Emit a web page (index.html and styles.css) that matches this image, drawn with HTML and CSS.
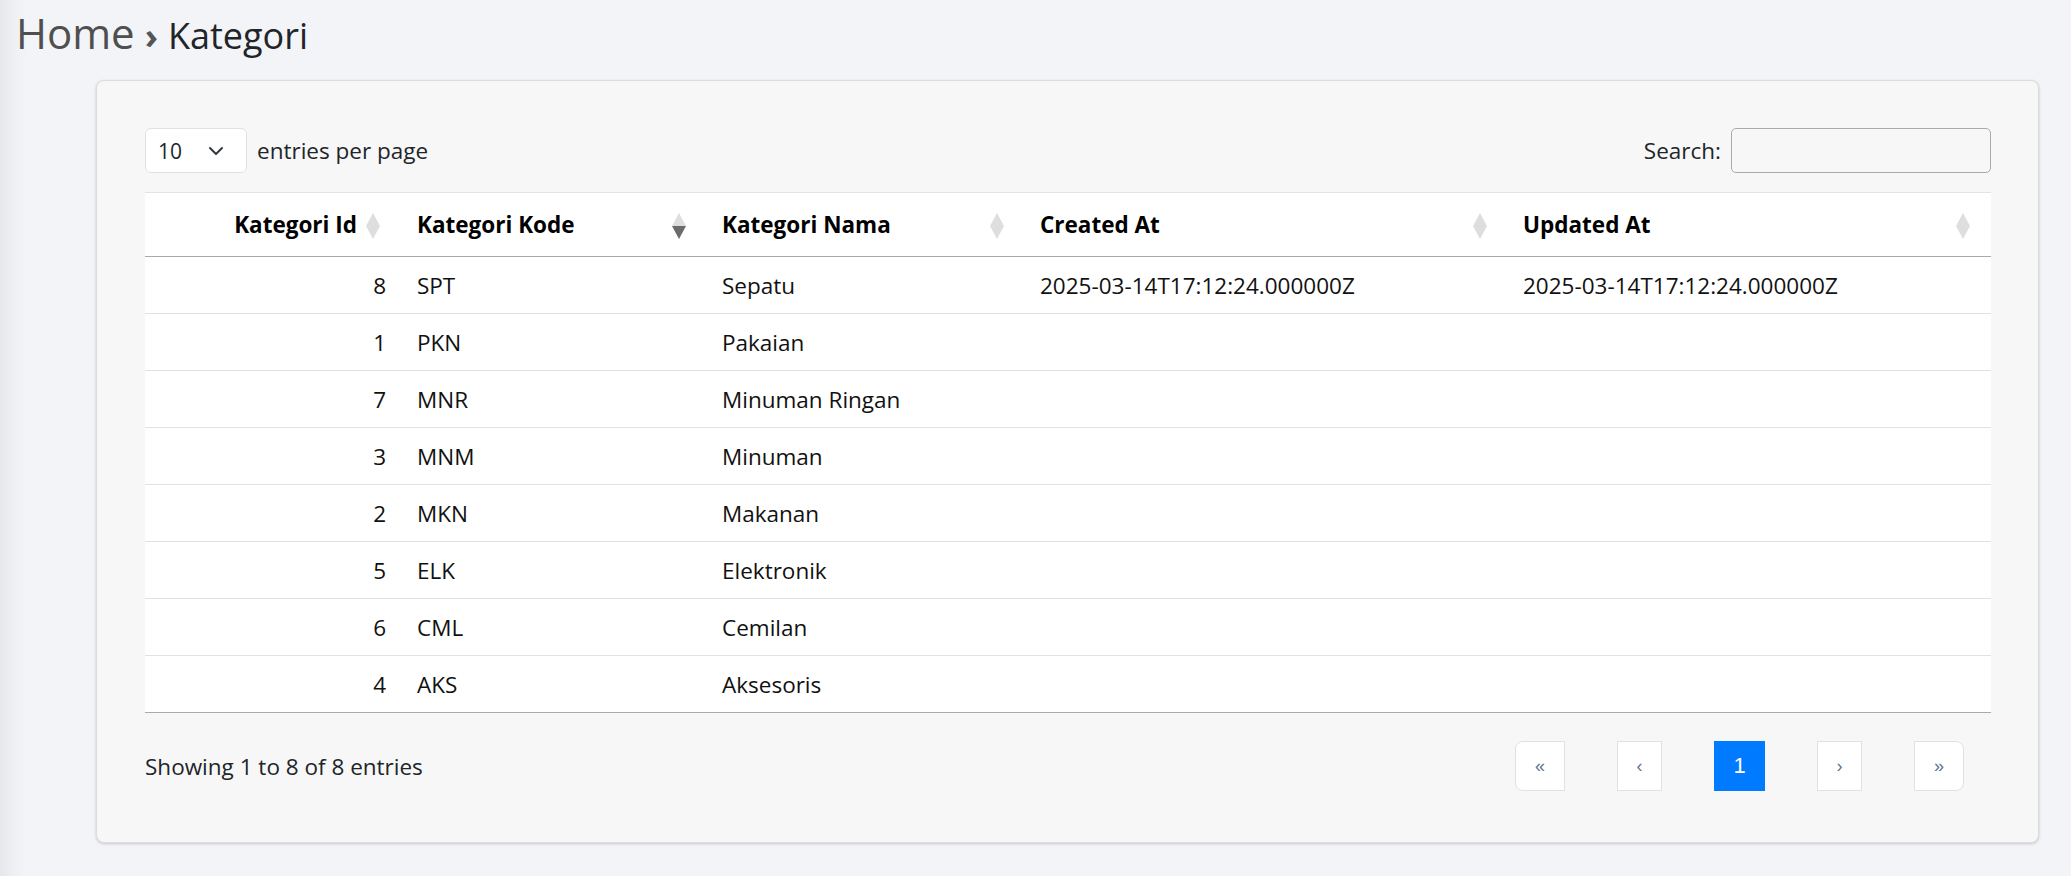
FILE: index.html
```html
<!DOCTYPE html>
<html lang="id">
<head>
<meta charset="utf-8">
<title>Kategori</title>
<link rel="stylesheet" href="styles.css">
</head>
<body>
<div class="page">
  <h1 class="crumbs"><span class="home">Home</span><span class="sep">›</span><span class="cur">Kategori</span></h1>
  <div class="card">
    <div class="top">
      <div class="perpage">
        <div class="select"><span>10</span><svg class="chev" width="16" height="10" viewBox="0 0 16 10"><path d="M2 2 L8 8 L14 2" fill="none" stroke="#343a40" stroke-width="2" stroke-linecap="round" stroke-linejoin="round"/></svg></div>
        <span class="label">entries per page</span>
      </div>
      <div class="search">
        <span class="label">Search:</span>
        <div class="input"></div>
      </div>
    </div>
    <table class="dt">
      <colgroup>
        <col class="c1"><col class="c2"><col class="c3"><col class="c4"><col class="c5">
      </colgroup>
      <thead>
        <tr>
          <th class="num">Kategori Id<span class="sorter"></span></th>
          <th>Kategori Kode<span class="sorter desc"></span></th>
          <th>Kategori Nama<span class="sorter"></span></th>
          <th>Created At<span class="sorter"></span></th>
          <th class="last">Updated At<span class="sorter"></span></th>
        </tr>
      </thead>
      <tbody>
        <tr><td class="num">8</td><td>SPT</td><td>Sepatu</td><td>2025-03-14T17:12:24.000000Z</td><td>2025-03-14T17:12:24.000000Z</td></tr>
        <tr><td class="num">1</td><td>PKN</td><td>Pakaian</td><td></td><td></td></tr>
        <tr><td class="num">7</td><td>MNR</td><td>Minuman Ringan</td><td></td><td></td></tr>
        <tr><td class="num">3</td><td>MNM</td><td>Minuman</td><td></td><td></td></tr>
        <tr><td class="num">2</td><td>MKN</td><td>Makanan</td><td></td><td></td></tr>
        <tr><td class="num">5</td><td>ELK</td><td>Elektronik</td><td></td><td></td></tr>
        <tr><td class="num">6</td><td>CML</td><td>Cemilan</td><td></td><td></td></tr>
        <tr><td class="num">4</td><td>AKS</td><td>Aksesoris</td><td></td><td></td></tr>
      </tbody>
    </table>
    <div class="bottom">
      <div class="info">Showing 1 to 8 of 8 entries</div>
      <nav class="pager">
        <span class="pg first">«</span>
        <span class="pg nav">‹</span>
        <span class="pg active">1</span>
        <span class="pg nav">›</span>
        <span class="pg last">»</span>
      </nav>
    </div>
  </div>
</div>
</body>
</html>
```
FILE: styles.css
```css
html, body {
  margin: 0;
  padding: 0;
}
body {
  background: linear-gradient(to right, #e6e7eb 0, #eff0f4 14px, #f3f4f8 28px, #f3f4f8 100%);
  font-family: "Open Sans", "Noto Sans", "Liberation Sans", sans-serif;
  color: #212529;
  font-size: 22.5px;
  min-height: 876px;
}
.page {
  padding: 0 32px 0 0;
}
.crumbs {
  margin: 0;
  padding: 8px 0 0 16px;
  height: 80px;
  box-sizing: border-box;
  font-weight: 400;
  line-height: 1.2;
  display: flex;
  align-items: baseline;
}
.home {
  font-size: 42px;
  color: #4f4f4f;
  font-weight: 500;
}
.sep {
  font-size: 36px;
  color: #555;
  font-weight: 700;
  margin: 0 10px 0 10px;
}
.cur {
  font-size: 36px;
  color: #212529;
}
.card {
  margin-left: 96px;
  background: #f7f7f7;
  border: 1px solid #dcdcdc;
  border-radius: 8px;
  box-shadow: 0 1px 3px rgba(0,0,0,0.18);
  padding: 47px 47px 51px 48px;
}
.top {
  display: flex;
  justify-content: space-between;
  align-items: center;
  height: 45px;
  margin-bottom: 19px;
}
.perpage, .search {
  display: flex;
  align-items: center;
}
.select {
  box-sizing: border-box;
  width: 102px;
  height: 45px;
  background: #fff;
  border: 1px solid #dee2e6;
  border-radius: 6px;
  display: flex;
  align-items: center;
  justify-content: space-between;
  padding: 0 22px 0 12px;
  font-size: 21px;
}
.perpage .label {
  margin-left: 10px;
}
.search .label {
  margin-right: 10px;
}
.input {
  box-sizing: border-box;
  width: 260px;
  height: 45px;
  border: 1px solid #aaa;
  border-radius: 5px;
}
.dt {
  width: 100%;
  border-collapse: collapse;
  table-layout: fixed;
  background: #fff;
}
.c1 { width: 261px; }
.c2 { width: 305px; }
.c3 { width: 318px; }
.c4 { width: 483px; }
.c5 { width: 479px; }
.dt thead tr {
  border-top: 1px solid #e3e3e3;
  border-bottom: 1px solid #aaa;
}
.dt th {
  height: 63px;
  padding: 0 11px;
  text-align: left;
  font-weight: 700;
  color: #000;
  position: relative;
  white-space: nowrap;
}
.dt th.num {
  text-align: right;
  padding-right: 49px;
}
.dt td {
  height: 56px;
  padding: 0 11px;
  color: #111;
  white-space: nowrap;
}
.dt td.num {
  text-align: right;
  padding-right: 20px;
}
.dt tbody tr {
  border-bottom: 1px solid #e2e2e2;
}
.dt tbody tr:last-child {
  border-bottom: 1px solid #aaa;
}
.sorter {
  position: absolute;
  right: 25px;
  top: 50%;
  margin-top: -12px;
  width: 14px;
  height: 26px;
}
.dt th.num .sorter {
  right: 26px;
}
.dt th.last .sorter {
  right: 21px;
}
.sorter::before, .sorter::after {
  content: "";
  position: absolute;
  left: 0;
  border-left: 7px solid transparent;
  border-right: 7px solid transparent;
}
.sorter::before {
  top: 0;
  border-bottom: 13px solid #dedede;
}
.sorter::after {
  top: 13px;
  border-top: 13px solid #dedede;
}
.sorter.desc::after {
  border-top-color: #6b6b6b;
}
.bottom {
  display: flex;
  justify-content: space-between;
  align-items: center;
  margin-top: 28px;
}
.pager {
  display: flex;
  gap: 52px;
  margin-right: 27px;
}
.pg {
  box-sizing: border-box;
  height: 50px;
  display: flex;
  align-items: center;
  justify-content: center;
  background: #fff;
  border: 1px solid #dee2e6;
  color: #5f7490;
  font-family: "Liberation Sans", Arial, sans-serif;
  font-size: 18px;
}
.pg.first {
  width: 50px;
  border-radius: 8px 0 0 8px;
}
.pg.last {
  width: 50px;
  border-radius: 0 8px 8px 0;
}
.pg.nav {
  width: 45px;
}
.pg.active {
  width: 51px;
  background: #007bff;
  border-color: #007bff;
  color: #fff;
  font-size: 22px;
}
```
